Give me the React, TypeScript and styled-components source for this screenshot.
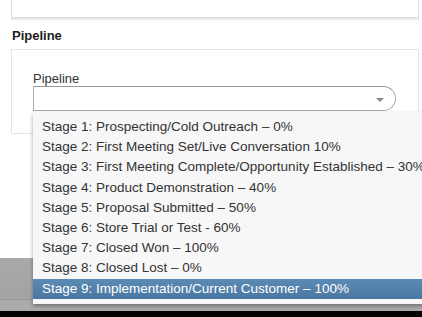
import styled, { createGlobalStyle } from "styled-components";

const GlobalStyle = createGlobalStyle`
  html, body {
    margin: 0;
    padding: 0;
    background: #fff;
    overflow: hidden;
  }
  body {
    font-family: "Liberation Sans", Arial, sans-serif;
    color: #333;
  }
`;

const Page = styled.div`
  width: 422px;
  height: 317px;
  display: flex;
  flex-direction: column;
  overflow: hidden;
`;

const Content = styled.div`
  padding: 0 3px 0 11px;
  display: flex;
  flex-direction: column;
`;

const TopCard = styled.div`
  height: 17px;
  border: 1px solid #dcdcdc;
  border-top: none;
  box-shadow: 0 2px 0 #e9e9e9;
  background: #fff;
`;

const SectionTitle = styled.div`
  margin: 10px 0 6px 1px;
  font-size: 13px;
  line-height: 15px;
  font-weight: bold;
  color: #222;
`;

const Card = styled.div`
  border: 1px solid #e4e4e4;
  padding: 21px 21px 22px 21px;
  background: #fff;
`;

const Label = styled.div`
  font-size: 13px;
  line-height: 15px;
  color: #333;
`;

const SelectWrap = styled.div`
  position: relative;
  width: 363px;
`;

const SelectBox = styled.div`
  height: 23px;
  border: 1px solid #aaa;
  border-top-color: #999;
  border-radius: 0 13px 13px 0;
  background: #fff;
  display: flex;
  align-items: center;
  justify-content: flex-end;
  padding-right: 11px;
`;

const Arrow = styled.span`
  width: 0;
  height: 0;
  border-left: 4px solid transparent;
  border-right: 4px solid transparent;
  border-top: 4px solid #888;
  margin-top: 2px;
`;

const Menu = styled.ul`
  position: absolute;
  top: 26px;
  left: 0;
  width: 440px;
  margin: 0;
  padding: 5px 0;
  list-style: none;
  background: #f7f7f7;
  box-shadow: 0 2px 4px rgba(0, 0, 0, 0.35);
  z-index: 5;
`;

const Option = styled.li<{ $active?: boolean }>`
  height: 20.2px;
  line-height: 20.2px;
  padding-left: 9px;
  font-size: 13.5px;
  white-space: nowrap;
  color: ${(p) => (p.$active ? "#fff" : "#333")};
  background: ${(p) =>
    p.$active ? "linear-gradient(#5b8bb5, #4a77a1)" : "transparent"};
`;

const Spacer = styled.div`
  flex: 0 0 124px;
`;

const Footer = styled.div`
  height: 41px;
  background: linear-gradient(#a9a9a9, #a3a3a3);
  border-bottom: 1px solid #979797;
`;

const FooterLow = styled.div`
  height: 11px;
  background: #ababab;
`;

const Dark = styled.div`
  flex: 1;
  background: #000;
`;

const stages = [
  "Stage 1: Prospecting/Cold Outreach \u2013 0%",
  "Stage 2: First Meeting Set/Live Conversation 10%",
  "Stage 3: First Meeting Complete/Opportunity Established \u2013 30%",
  "Stage 4: Product Demonstration \u2013 40%",
  "Stage 5: Proposal Submitted \u2013 50%",
  "Stage 6: Store Trial or Test - 60%",
  "Stage 7: Closed Won \u2013 100%",
  "Stage 8: Closed Lost \u2013 0%",
  "Stage 9: Implementation/Current Customer \u2013 100%",
];

export default function App() {
  return (
    <>
      <GlobalStyle />
      <Page>
        <Content>
          <TopCard />
          <SectionTitle>Pipeline</SectionTitle>
          <Card>
            <Label>Pipeline</Label>
            <SelectWrap>
              <SelectBox>
                <Arrow />
              </SelectBox>
              <Menu>
                {stages.map((s, i) => (
                  <Option key={s} $active={i === stages.length - 1}>
                    {s}
                  </Option>
                ))}
              </Menu>
            </SelectWrap>
          </Card>
        </Content>
        <Spacer />
        <Footer />
        <FooterLow />
        <Dark />
      </Page>
    </>
  );
}
